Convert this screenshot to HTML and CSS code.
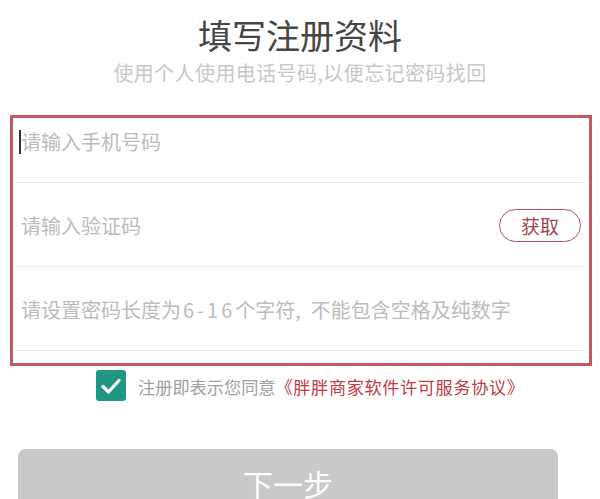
FILE: index.html
```html
<!DOCTYPE html>
<html lang="zh">
<head>
<meta charset="utf-8">
<link rel="stylesheet" href="styles.css">
</head>
<body>
<div class="page">
  <h1 class="title">填写注册资料</h1>
  <p class="subtitle">使用个人使用电话号码,以便忘记密码找回</p>
  <div class="form">
    <div class="row row-first">
      <span class="cursor"></span><span class="ph">请输入手机号码</span>
    </div>
    <div class="row">
      <span class="ph">请输入验证码</span>
      <span class="get">获取</span>
    </div>
    <div class="row">
      <span class="ph">请设置密码长度为<span class="num">6-16</span>个字符<span class="comma">,</span>不能包含空格及纯数字</span>
    </div>
  </div>
  <div class="agree">
    <span class="check"><svg viewBox="0 0 30 30" width="30" height="30"><path d="M7 15.5 L12.5 21 L23 9.5" fill="none" stroke="#fff" stroke-width="3.2" stroke-linecap="round" stroke-linejoin="round"/></svg></span>
    <span class="agree-text">注册即表示您同意<span class="link">《胖胖商家软件许可服务协议》</span></span>
  </div>
  <div class="btn">下一步</div>
</div>
</body>
</html>
```
FILE: styles.css
```css
html, body {
  margin: 0;
  padding: 0;
  background: #fff;
}
body {
  font-family: "Noto Sans CJK SC", "Noto Sans", sans-serif;
  width: 600px;
  height: 499px;
  overflow: hidden;
}
.page {
  display: flex;
  flex-direction: column;
}
.title {
  margin: 12px 0 0;
  text-align: center;
  font-size: 34px;
  font-weight: 400;
  line-height: 46px;
  color: #454545;
}
.subtitle {
  margin: 0;
  text-align: center;
  font-size: 20px;
  letter-spacing: 0.4px;
  line-height: 30px;
  color: #c8c8c8;
}
.form {
  margin: 27px 8px 0 10px;
  border: 3px solid #c05a62;
  height: 245px;
  padding: 0 3px;
}
.row {
  height: 84px;
  border-bottom: 1px solid #ebebeb;
  display: flex;
  align-items: center;
  padding-left: 5px;
  padding-top: 2px;
  box-sizing: border-box;
}
.row-first {
  height: 65px;
  align-items: flex-start;
  padding-top: 9px;
}
.cursor {
  width: 2px;
  height: 24px;
  background: #333;
  margin-left: -2px;
  margin-right: 0;
  margin-top: 3px;
}
.ph {
  font-size: 20px;
  line-height: 30px;
  color: #bcbcbc;
}
.num {
  letter-spacing: 3px;
  margin-left: 2px;
}
.comma {
  margin-right: 10px;
}
.get {
  margin-left: auto;
  margin-right: 5px;
  width: 80px;
  height: 31px;
  border: 1.5px solid #b3535b;
  border-radius: 17px;
  display: flex;
  align-items: center;
  justify-content: center;
  font-size: 19px;
  color: #a5434b;
}
.agree {
  display: flex;
  align-items: center;
  margin: 4px 0 0 96px;
  gap: 12px;
}
.check {
  width: 30px;
  height: 31px;
  background: #1f9782;
  border-radius: 3px;
  display: flex;
  align-items: center;
  justify-content: center;
}
.agree-text {
  font-size: 17.2px;
  color: #a0a0a0;
  margin-top: 2px;
  white-space: nowrap;
}
.link {
  color: #c23a45;
  letter-spacing: 0.6px;
}
.btn {
  margin: 48px 0 0 18px;
  width: 540px;
  height: 70px;
  background: #c9c9c9;
  border-radius: 8px;
  color: #fff;
  font-size: 30px;
  line-height: 40px;
  text-align: center;
  padding-top: 14px;
  box-sizing: border-box;
}
```
